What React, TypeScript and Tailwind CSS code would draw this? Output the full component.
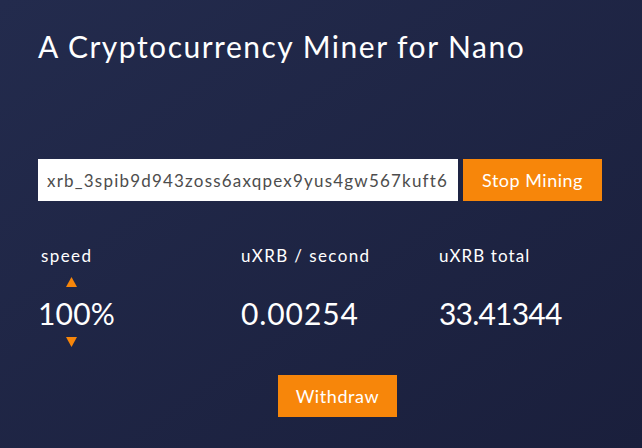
import { useState } from "react";

/* ---------- Arrow ---------- */
function Arrow({ up, onClick }: { up?: boolean; onClick: () => void }) {
  return (
    <button onClick={onClick} className="w-[66px] h-[18px] flex justify-center items-center">
      <svg width="11" height="10" viewBox="0 0 11 10">
        <polygon points={up ? "5.5,0 11,10 0,10" : "0,0 11,0 5.5,10"} fill="#f7860a" />
      </svg>
    </button>
  );
}

/* ---------- Main Component ---------- */
export default function App() {
  const [speed, setSpeed] = useState(100);
  const [address, setAddress] = useState("xrb_3spib9d943zoss6axqpex9yus4gw567kuft6");

  return (
    <main
      className="w-[642px] h-[448px] overflow-hidden bg-gradient-to-br from-[#232b4d] to-[#1a1f3c] text-white px-[38px] pt-[26px]"
      style={{ fontFamily: "Lato, 'Open Sans', sans-serif" }}
    >
      <h1 className="text-[30px] leading-[40px] tracking-[1.5px]">A Cryptocurrency Miner for Nano</h1>

      <div className="mt-[93px] flex gap-[5px]">
        <input
          value={address}
          onChange={(e) => setAddress(e.target.value)}
          className="w-[420px] h-[42px] bg-white text-[#4d4d4d] text-[17px] tracking-[1.2px] px-[9px] outline-none"
        />
        <button className="w-[139px] h-[42px] bg-[#f7860a] text-[18px] tracking-[0.5px] text-white">Stop Mining</button>
      </div>

      <div className="mt-[43px] grid grid-cols-[203px_198px_1fr] text-[17px] tracking-[1.4px]">
        <div className="flex flex-col">
          <span className="pl-[3px] leading-[24px]">speed</span>
          <div className="mt-[5px]">
            <Arrow up onClick={() => setSpeed(Math.min(100, speed + 10))} />
          </div>
          <span className="mt-[4px] text-[30px] leading-[36px] tracking-[0.2px]">{speed}%</span>
          <div className="mt-[2px]">
            <Arrow onClick={() => setSpeed(Math.max(0, speed - 10))} />
          </div>
        </div>
        <div className="flex flex-col">
          <span className="leading-[24px]">uXRB / second</span>
          <span className="mt-[27px] text-[30px] leading-[36px] tracking-[0.9px]">0.00254</span>
        </div>
        <div className="flex flex-col">
          <span className="leading-[24px] tracking-[1.1px]">uXRB total</span>
          <span className="mt-[27px] text-[30px] leading-[36px] tracking-[-0.8px]">33.41344</span>
        </div>
      </div>

      <div className="mt-[24px] flex">
        <button className="ml-[240px] w-[119px] h-[42px] bg-[#f7860a] text-[18px] tracking-[0.6px] text-white">
          Withdraw
        </button>
      </div>
    </main>
  );
}
